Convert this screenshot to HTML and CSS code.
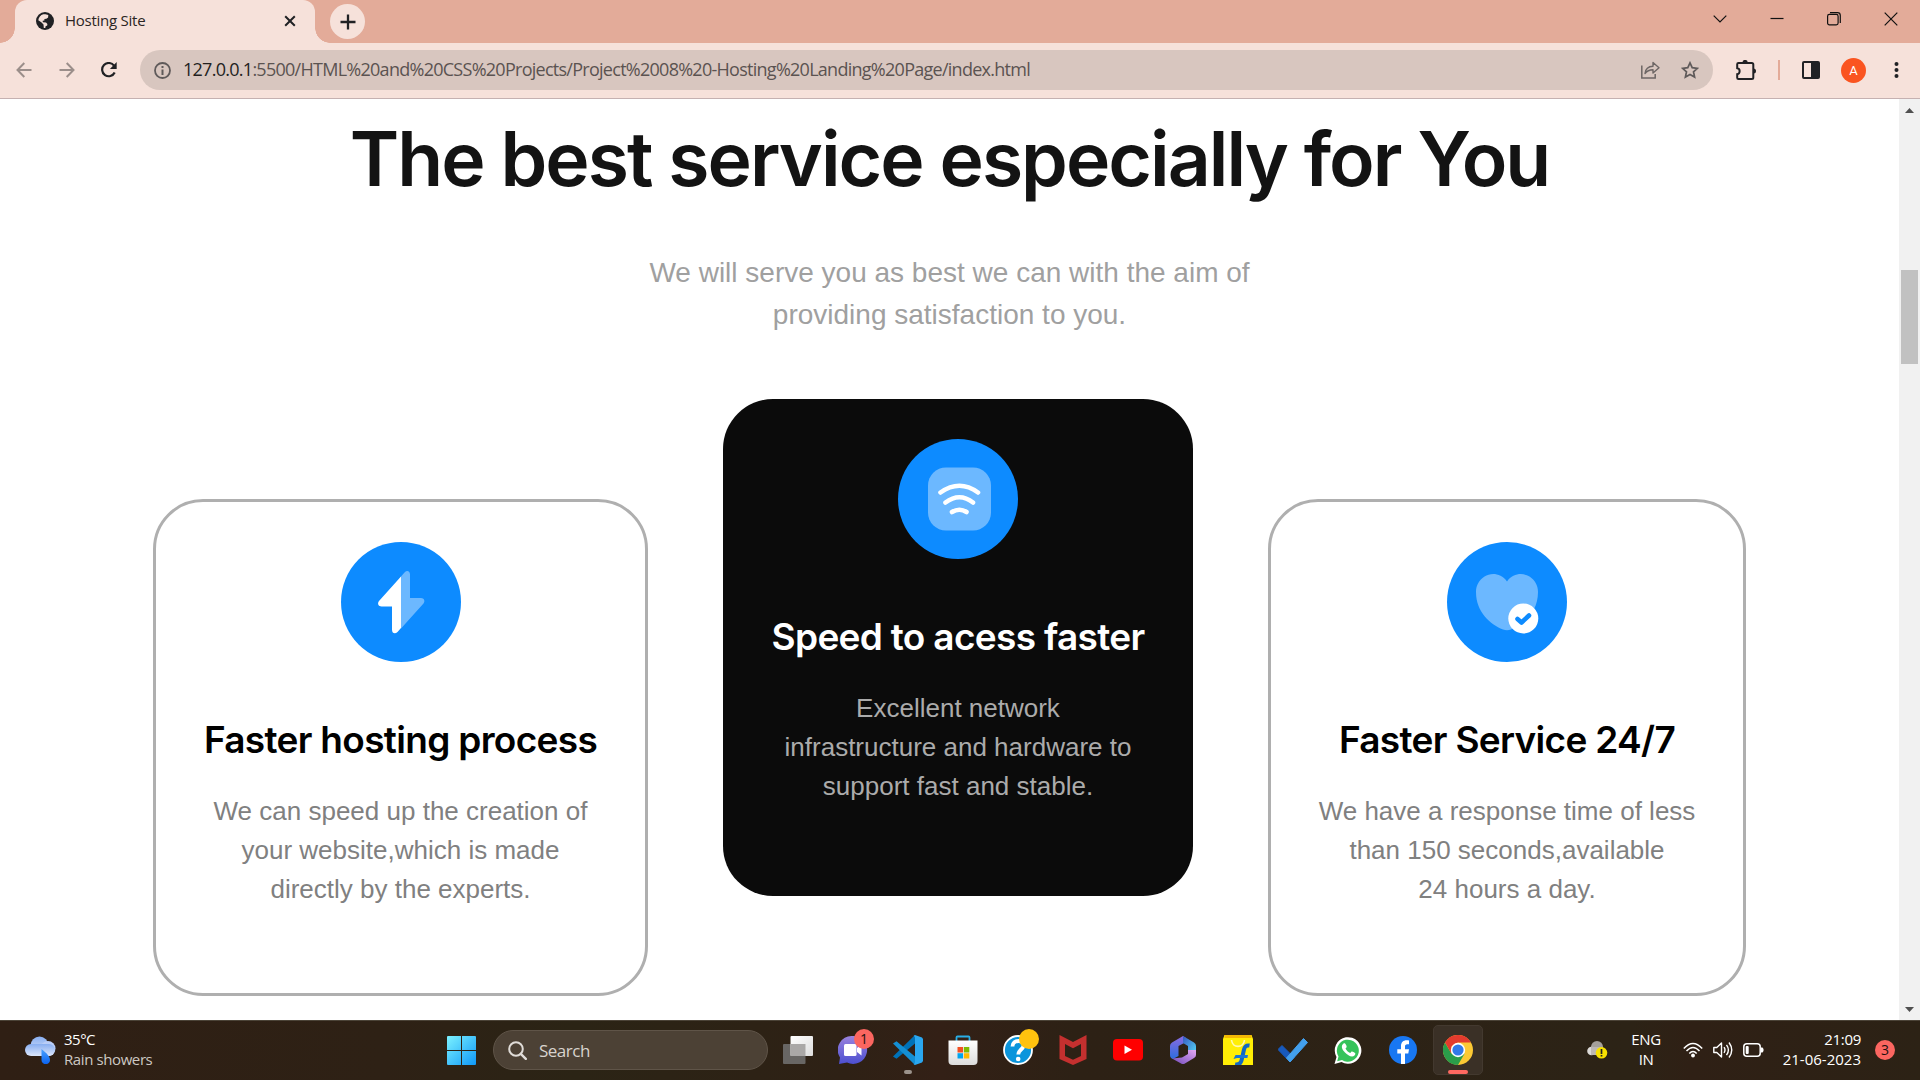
FILE: index.html
```html
<!DOCTYPE html>
<html lang="en">
<head>
<meta charset="utf-8">
<title>Hosting Site</title>
<link rel="stylesheet" href="styles.css">
</head>
<body>
<div class="screen">
  <header class="tabstrip">
    <div class="tab">
      <svg class="favicon" viewBox="0 0 18 18"><circle cx="9" cy="9" r="9" fill="#202124"/><path d="M9.5 2.2l2.8.8-.2 2.4-1.700 1.300-2 .2v1.600l-1.700.3.1 1.400 3.200.2 1.400 1.500-.2 1.700-1.600.6-.3 1.700-1.500.2-.3-3.600-2.200-2.200-3-2c.3-3 2.300-5.400 5-6.100z" fill="#f6e1da"/></svg>
      <span class="tab-title">Hosting Site</span>
      <svg class="tab-close" viewBox="0 0 12 12"><path d="M1.200 1.200l9.600 9.600M10.800 1.200l-9.600 9.600" stroke="#202124" stroke-width="2"/></svg>
    </div>
    <button class="newtab"><svg width="16" height="16" viewBox="0 0 16 16"><path d="M8 .5v15M.5 8h15" stroke="#202124" stroke-width="2.300"/></svg></button>
    <div class="winctl">
      <svg viewBox="0 0 14 14"><path d="M.7 3.700L7 10l6.300-6.300" fill="none" stroke="#111" stroke-width="1.200"/></svg>
      <svg viewBox="0 0 14 14"><path d="M.5 6.500h13" stroke="#111" stroke-width="1.200"/></svg>
      <svg viewBox="0 0 14 14"><rect x=".6" y="2.400" width="10.500" height="10.500" rx="1.800" fill="none" stroke="#111" stroke-width="1.200"/><path d="M3 .7h7.500a2.800 2.800 0 0 1 2.800 2.800V11" fill="none" stroke="#111" stroke-width="1.200"/></svg>
      <svg viewBox="0 0 14 14"><path d="M.7.7l12.600 12.600M13.300.7L.7 13.300" stroke="#111" stroke-width="1.200"/></svg>
    </div>
  </header>

  <nav class="toolbar">
    <div class="nav-buttons">
      <svg width="16" height="16" viewBox="0 0 16 16"><path d="M15.500 8H2M8.300 1L1.500 8l6.800 7" fill="none" stroke="#9b8e8a" stroke-width="2"/></svg>
      <svg width="16" height="16" viewBox="0 0 16 16"><path d="M.5 8H14M7.700 1l6.800 7-6.800 7" fill="none" stroke="#9b8e8a" stroke-width="2"/></svg>
      <svg width="16" height="16" viewBox="0 0 16 16"><path d="M13.700 10.500A6.600 6.600 0 1 1 13 3.600" fill="none" stroke="#202124" stroke-width="2.200"/><path d="M15.700 0v7H8.900z" fill="#202124"/></svg>
    </div>
    <div class="omnibox">
      <svg width="17" height="17" viewBox="0 0 17 17"><circle cx="8.500" cy="8.500" r="7.500" fill="none" stroke="#5f5a5a" stroke-width="1.800"/><path d="M8.500 7.500V13M8.500 4v2" stroke="#5f5a5a" stroke-width="2"/></svg>
      <span class="url"><b>127.0.0.1</b>:5500/HTML%20and%20CSS%20Projects/Project%2008%20-Hosting%20Landing%20Page/index.html</span>
      <svg class="share" width="19" height="18" viewBox="0 0 19 18"><path d="M.8 4.500v12.600h13.400V13" fill="none" stroke="#6d6665" stroke-width="1.500"/><path d="M4 12.500c.5-4.700 3.500-7 8-7.200V1.500l6 5.300-6 5.200V8.700c-3.600 0-6 1-8 3.800z" fill="none" stroke="#6d6665" stroke-width="1.400" stroke-linejoin="round"/></svg>
      <svg width="18" height="18" viewBox="0 0 18 18"><path d="M9 1.900l2.200 4.800 5.200.6-3.900 3.500 1.100 5.200L9 13.400 4.400 16l1.100-5.200L1.600 7.300l5.200-.6z" fill="none" stroke="#5f5a5a" stroke-width="1.700"/></svg>
    </div>
    <svg class="puzzle" width="21" height="21" viewBox="0 0 21 21"><path d="M2.500 3h13.300a1.500 1.500 0 0 1 1.500 1.500v13a1.500 1.500 0 0 1-1.500 1.500H2.500a1.300 1.300 0 0 1-1.300-1.300v-3.500c3-.4 3.500-5.500 0-6V4.300A1.300 1.300 0 0 1 2.500 3z" fill="none" stroke="#202124" stroke-width="2"/><path d="M6.500 2.500a2.600 2.600 0 0 1 5.200 0zM17.500 8.500a2.500 2.500 0 0 1 0 5z" fill="#202124"/></svg>
    <i class="divider"></i>
    <svg class="panel" width="18" height="18" viewBox="0 0 18 18"><rect x="1" y="1" width="16" height="16" rx="1" fill="none" stroke="#202124" stroke-width="2"/><path d="M9 1h8v16H9z" fill="#202124"/></svg>
    <span class="avatar">A</span>
    <svg class="kebab" width="5" height="18" viewBox="0 0 5 18"><circle cx="2.500" cy="3" r="2"/><circle cx="2.500" cy="9" r="2"/><circle cx="2.500" cy="15" r="2"/></svg>
  </nav>

  <div class="viewport">
    <main class="page">
      <h1>The best service especially for You</h1>
      <p class="lead">We will serve you as best we can with the aim of<br>providing satisfaction to you.</p>
      <section class="cards">
        <article class="card process">
          <svg class="icon" viewBox="0 0 120 120"><circle cx="60" cy="60" r="60" fill="#0d8bff"/><path d="M60 34.500L38 59c-2 2.500-.5 5.500 2.500 5.500H51v23c0 4 3 5 5.500 2.500L60 86z" fill="#fff"/><path d="M60 34.500l3.500-4c2.500-2.500 5.500-1.500 5.500 2V56h11c3 0 4.500 3 2.500 5.500L60 86.500z" fill="#6cb8ff"/></svg>
          <h2>Faster hosting process</h2>
          <p>We can speed up the creation of<br>your website,which is made<br>directly by the experts.</p>
        </article>
        <article class="card speed">
          <svg class="icon" viewBox="0 0 120 120"><circle cx="60" cy="60" r="60" fill="#0d8bff"/><rect x="30" y="28.500" width="63" height="63" rx="18" fill="#6cb8ff"/><path d="M42.500 53.500q19-13.500 37.500 0M47.500 63.500q14-10.500 27.500 0M54 73q7.500-4.500 14.500 0" fill="none" stroke="#fff" stroke-width="4.600" stroke-linecap="round"/></svg>
          <h2>Speed to acess faster</h2>
          <p>Excellent network<br>infrastructure and hardware to<br>support fast and stable.</p>
        </article>
        <article class="card service">
          <svg class="icon" viewBox="0 0 120 120"><circle cx="60" cy="60" r="60" fill="#0d8bff"/><path d="M60 39.500C54 31 44 30.500 37.500 34.500 32 38 29 43.500 29 50c0 20 14 32 27 37.500q4 1.500 8 0C77 82 91 70 91 50c0-6.500-3-12-8.500-15.500C76 30.500 66 31 60 39.500z" fill="#6cb8ff"/><circle cx="76.300" cy="76.500" r="15" fill="#fff"/><path d="M70.500 77l4 3.500 7.500-7" fill="none" stroke="#0d8bff" stroke-width="4.600" stroke-linecap="round" stroke-linejoin="round"/></svg>
          <h2>Faster Service 24/7</h2>
          <p>We have a response time of less<br>than 150 seconds,available<br>24 hours a day.</p>
        </article>
      </section>
    </main>
    <div class="scrollbar">
      <svg width="9" height="5" viewBox="0 0 9 5"><path d="M0 5L4.500 0 9 5z" fill="#505050"/></svg>
      <div class="track"><div class="thumb"></div></div>
      <svg width="9" height="5" viewBox="0 0 9 5"><path d="M0 0l4.500 5L9 0z" fill="#505050"/></svg>
    </div>
  </div>

  <footer class="taskbar">
    <div class="weather">
      <svg width="31" height="28" viewBox="0 0 31 28"><defs><linearGradient id="cl" x1="0" y1="0" x2="0" y2="1"><stop offset="0" stop-color="#88aef0"/><stop offset="1" stop-color="#dce6fb"/></linearGradient><linearGradient id="dr" x1="0" y1="0" x2="0" y2="1"><stop offset="0" stop-color="#4aa2ff"/><stop offset="1" stop-color="#0a62f0"/></linearGradient></defs><circle cx="14.500" cy="9.500" r="9" fill="url(#cl)"/><circle cx="23" cy="12.500" r="7.500" fill="#b9cdf7"/><rect x="0" y="8" width="30" height="12" rx="6" fill="url(#cl)"/><path d="M16.500 13c5 4 8.500 7.500 8.500 11a4.200 4.200 0 0 1-8.500 0z" fill="url(#dr)"/></svg>
      <div class="two-line"><span class="temp">35°C</span><span class="dim">Rain showers</span></div>
    </div>

    <div class="apps">
      <svg class="start" width="29" height="29" viewBox="0 0 29 29"><defs><linearGradient id="wn" x1="0" y1="0" x2="1" y2="1"><stop offset="0" stop-color="#7cf2ff"/><stop offset="1" stop-color="#0f98f8"/></linearGradient></defs><path d="M1 0h13v14H0V1a1 1 0 0 1 1-1zM15 0h13a1 1 0 0 1 1 1v13H15zM0 15h14v14H1a1 1 0 0 1-1-1zM15 15h14v13a1 1 0 0 1-1 1H15z" fill="url(#wn)"/></svg>
      <div class="search">
        <svg width="19" height="19" viewBox="0 0 19 19"><circle cx="8" cy="8" r="6.800" fill="none" stroke="#e0dcd8" stroke-width="2"/><path d="M12.800 12.800l5 5" stroke="#e0dcd8" stroke-width="2.400" stroke-linecap="round"/></svg>
        <span>Search</span>
      </div>

      <div class="app"><svg viewBox="0 0 30 30"><defs><linearGradient id="tv" x1="0" y1="0" x2="1" y2="1"><stop offset="0" stop-color="#fff"/><stop offset="1" stop-color="#ddd"/></linearGradient></defs><rect x="0" y="9" width="22.500" height="20" rx="1" fill="#686664"/><rect x="7.500" y="1" width="22.500" height="20" rx="1" fill="url(#tv)"/><path d="M7.500 9h15v12h-15z" fill="#aaa8a7"/></svg></div>
      <div class="app"><svg viewBox="0 0 30 30"><defs><linearGradient id="ct" x1="0" y1="0" x2="0" y2="1"><stop offset="0" stop-color="#9a83dd"/><stop offset="1" stop-color="#4c4fd0"/></linearGradient></defs><path d="M15 1a14 14 0 1 1-6 26.600L1 29l1-6.500A14 14 0 0 1 15 1z" fill="url(#ct)"/><rect x="6" y="9" width="12.500" height="12" rx="1.500" fill="#fff"/><path d="M19 13l4.500-3.500v11L19 17z" fill="#fff"/></svg><span class="badge chat">1</span></div>
      <div class="app"><svg viewBox="0 0 30 30"><path d="M0 21.500L22 0v8.500L3.500 23.700z" fill="#0072b8"/><path d="M0 8.500l3.500-2.300L22 21.500V30z" fill="#148fd4"/><path d="M22 0l7 2.500 1 1.500v22l-1 1.500-7 2.500-1.500-1c1 0 1.500-1 1.500-2V3c0-1-.5-2-1.500-2z" fill="#2aa7f0"/></svg><i class="running"></i></div>
      <div class="app"><svg viewBox="0 0 30 30"><defs><linearGradient id="st" x1="0" y1="0" x2="0" y2="1"><stop offset="0" stop-color="#fff"/><stop offset="1" stop-color="#dcdcdc"/></linearGradient></defs><path d="M8.500 6V2.500a1 1 0 0 1 1-1h11a1 1 0 0 1 1 1V6" fill="none" stroke="#29aee6" stroke-width="1.800"/><path d="M.5 5.500h29V26a4 4 0 0 1-4 4h-21a4 4 0 0 1-4-4z" fill="url(#st)"/><path d="M9.500 12H15v5.500H9.500z" fill="#f25022"/><path d="M15.800 12h5.500v5.500h-5.500z" fill="#7fba00"/><path d="M9.500 18.200H15v5.300H9.500z" fill="#00a4ef"/><path d="M15.800 18.200h5.500v5.300h-5.500z" fill="#ffb900"/></svg></div>
      <div class="app"><svg viewBox="0 0 30 30"><circle cx="15" cy="15" r="14" fill="#0b95dc" stroke="#fff" stroke-width="1.800"/><path d="M9.500 11.500c0-7.500 12-7 11-.5-.6 3.500-5.200 4-5.200 8.500" fill="none" stroke="#fff" stroke-width="3.800"/><circle cx="15.200" cy="24" r="2.300" fill="#fff"/></svg><i class="dot"></i></div>
      <div class="app"><svg viewBox="0 0 30 30"><path d="M1.500 0L15 7 28.500 0v24L15 30 1.500 24zM7 9v12l8 3.700L23 21V9l-8 4.300z" fill="#c4302f" fill-rule="evenodd"/></svg></div>
      <div class="app"><svg viewBox="0 0 30 30"><rect x="0" y="4" width="30" height="21.500" rx="4" fill="#f00"/><path d="M11.500 10.500l7.500 4.300-7.500 4.300z" fill="#fff"/></svg></div>
      <div class="app"><svg viewBox="0 0 30 30"><defs><linearGradient id="m1" x1="0" y1="0" x2="0" y2="1"><stop offset="0" stop-color="#8b6be0"/><stop offset="1" stop-color="#2c6de0"/></linearGradient><linearGradient id="m2" x1="0" y1="0" x2="1" y2="1"><stop offset="0" stop-color="#3556c0"/><stop offset="1" stop-color="#56d8f8"/></linearGradient><linearGradient id="m3" x1="0" y1="1" x2="1" y2="0"><stop offset="0" stop-color="#7048b8"/><stop offset="1" stop-color="#e3a8f5"/></linearGradient></defs><path d="M15 1L4 7.500Q2 8.500 2 11v9q0 3 3 4l5.500-3V11L18 7V3z" fill="url(#m1)"/><path d="M15 1l11 6.500Q28 8.500 28 11v8l-8-3v-5l-5-3z" fill="url(#m2)"/><path d="M28 15v5q0 2-2 3l-9.500 5.700q-1.500.8-3 0L4 23.500l10-1 6-3.500v-4z" fill="url(#m3)"/></svg></div>
      <div class="app"><svg viewBox="0 0 30 30"><path d="M1.500 0h27L30 4v26H0V4z" fill="#ffee05"/><path d="M1.500 0h27v3h-27z" fill="#f2b705"/><path d="M8.500 5c1 8.500 12 8.500 13 0" fill="none" stroke="#fff7b0" stroke-width="1.600"/><path d="M12 29.500c3 .5 5.500-.5 6.500-4L21 14.500c.8-3.500 2.300-4.500 5.500-4" fill="none" stroke="#1168c5" stroke-width="4"/><path d="M10.500 24l2-4h12.500l-.6 3H14z" fill="#1a77d4"/></svg></div>
      <div class="app"><svg viewBox="0 0 30 30"><path d="M0 14.500L4 10.500l12 12-4 4.500z" fill="#185abd" stroke="#185abd" stroke-linejoin="round"/><path d="M12 27L8.500 23 25.500 3.500 29.500 7.500z" fill="#43a0ed" stroke="#43a0ed" stroke-linejoin="round"/></svg></div>
      <div class="app"><svg viewBox="0 0 30 30"><path d="M1.500 29l2-7A13.300 13.300 0 1 1 8.500 27z" fill="#fff"/><path d="M4.200 26.300l1.300-4.800A11 11 0 1 1 9 25z" fill="#35c35a"/><path d="M10.500 8.500c-3 2.500-1.500 6 1.500 9s7 5.500 9.500 3c1.500-1.700 1-2.300-.5-3.200-2.500-1.600-2.500-.8-3.800.6-1.700-.5-4-2.700-4.700-4.400 1.300-1.300 1.500-1.700.6-3.500-.8-1.600-1.300-2-2.600-1.500z" fill="#fff"/></svg></div>
      <div class="app"><svg viewBox="0 0 30 30"><circle cx="15" cy="15" r="14" fill="#1877f2"/><path d="M13 29V18.500H9.300v-4.200H13v-3c0-4 2.300-6 5.600-6 1.200 0 2.400.2 2.400.2v3.700h-1.700c-1.700 0-2.300 1-2.300 2.200v2.900h4l-.7 4.200H17V29z" fill="#fff"/></svg></div>
      <div class="app active"><svg viewBox="0 0 30 30"><circle cx="15" cy="15" r="15" fill="#fcc934"/><path d="M2 7.500A15 15 0 0 0 15 30l6.500-11.200L15 15l-6.500 3.700z" fill="#2a9d4a"/><path d="M2 7.500A15 15 0 0 1 28 7.500H15L8.500 11.200v7.500z" fill="#e33b2e"/><circle cx="15" cy="15" r="7.200" fill="#fff"/><circle cx="15" cy="15" r="5.600" fill="#3279e8"/></svg><i class="running focused"></i></div>
    </div>

    <div class="tray">
      <svg class="cloud" width="21" height="18" viewBox="0 0 21 18"><circle cx="10" cy="6" r="6" fill="#a5a09b"/><circle cx="4.500" cy="10" r="4.300" fill="#dcdad7"/><path d="M4 6h12v8H4z" fill="#bcb8b4"/><circle cx="14.500" cy="11.800" r="5.800" fill="#f7e000"/><path d="M14.500 8v5M14.500 14v1.600" stroke="#222" stroke-width="1.700"/></svg>
      <div class="two-line lang"><span>ENG</span><span>IN</span></div>
      <svg class="wifi" width="20" height="16" viewBox="0 0 20 16"><path d="M.8 6.500Q10-3.500 19.200 6.500M3.500 9Q10 1.800 16.500 9M6.300 11.600Q10 7.500 13.700 11.600" fill="none" stroke="#fff" stroke-width="1.500"/><circle cx="10" cy="13.500" r="1.900" fill="#fff"/></svg>
      <svg width="20" height="18" viewBox="0 0 20 18"><path d="M.8 6.500h3L8.500 2v14l-4.700-4.500h-3z" fill="none" stroke="#fff" stroke-width="1.400" stroke-linejoin="round"/><path d="M11 6.200q2 2.800 0 5.600M13.500 3.800q3.800 5.200 0 10.400M16 1.500q5.500 7.500 0 15" fill="none" stroke="#fff" stroke-width="1.400"/></svg>
      <svg width="21" height="14" viewBox="0 0 21 14"><rect x=".8" y=".8" width="16.400" height="12.400" rx="3" fill="none" stroke="#fff" stroke-width="1.500"/><rect x="2.700" y="3" width="3" height="8" rx="1" fill="#fff"/><path d="M18 4.500h1.500L20.500 6v2l-1 1.500H18z" fill="#fff"/></svg>
      <div class="two-line clock"><span class="time">21:09</span><span class="date">21-06-2023</span></div>
      <span class="badge notif">3</span>
    </div>
  </footer>
</div>
</body>
</html>
```
FILE: styles.css
```css
* { box-sizing: border-box; }
body { margin: 0; font-family: "Open Sans", "Noto Sans", sans-serif; }
svg { display: block; flex: none; }
.screen { width: 1920px; height: 1080px; display: flex; flex-direction: column; overflow: hidden; background: #fff; }

/* tab strip */
.tabstrip { height: 43px; flex: none; background: #e3ab99; display: flex; padding-left: 15px; }
.tab { position: relative; width: 300px; height: 43px; background: #f6e1da; border-radius: 12px 12px 0 0; display: flex; align-items: center; padding: 0 19px 1px 21px; }
.tab::before, .tab::after { content: ""; position: absolute; bottom: 0; width: 15px; height: 15px; }
.tab::before { left: -15px; background: radial-gradient(circle at 0 0, transparent 14.5px, #f6e1da 15px); }
.tab::after { right: -15px; background: radial-gradient(circle at 100% 0, transparent 14.5px, #f6e1da 15px); }
.favicon { width: 18px; height: 18px; }
.tab-title { margin-left: 11px; padding-bottom: 2px; font-size: 15px; letter-spacing: -0.25px; color: #2b2523; white-space: nowrap; }
.tab-close { width: 12px; height: 12px; margin-left: auto; }
.newtab { width: 35px; height: 35px; margin: 4px 0 0 15px; border: 0; padding: 0; border-radius: 50%; background: #f6e1da; display: grid; place-items: center; }
.winctl { margin-left: auto; display: flex; gap: 43px; padding: 12px 22px 0 0; }
.winctl svg { width: 14px; height: 14px; }

/* toolbar */
.toolbar { height: 56px; flex: none; background: #f6e1da; border-bottom: 1px solid #c5b1b1; display: flex; align-items: center; padding: 0 21px 1px 16px; }
.nav-buttons { display: flex; gap: 26.5px; width: 124px; }
.omnibox { width: 1573px; height: 40px; border-radius: 20px; background: #d8c6bf; display: flex; align-items: center; padding: 0 14px 0 14px; }
.url { margin-left: 12px; padding-bottom: 2px; font-size: 18px; letter-spacing: -0.73px; color: #5b5351; white-space: nowrap; }
.url b { font-weight: 400; color: #231f1e; }
.share { margin: 0 21px 0 auto; }
.puzzle { margin-left: 23px; }
.divider { width: 2px; height: 20px; background: #e3ab99; margin-left: 21px; }
.panel { margin-left: 22px; }
.avatar { width: 25px; height: 25px; margin-left: 21px; border-radius: 50%; background: #fa5420; color: #fff; font: 13px/25px Roboto, sans-serif; text-align: center; }
.kebab { margin-left: auto; fill: #202124; }

/* page */
.viewport { flex: 1; display: flex; min-height: 0; }
.page { width: 1899px; background: #fff; text-align: center; overflow: hidden; }
.page h1 { margin: 15px 0 0; font: 620 75px/90px Inter, sans-serif; letter-spacing: -1.98px; color: #131313; white-space: nowrap; }
.lead { margin: 48px 0 0; font: 28px/42px "Liberation Sans", Arial, sans-serif; color: #a0a0a0; }
.cards { display: flex; align-items: flex-start; margin: 63px 0 0 153px; }
.card { height: 497px; border-radius: 50px; border: 3px solid #afafaf; padding-top: 40px; }
.process { width: 495px; margin-top: 100px; }
.speed { width: 470px; margin-left: 75px; border: 0; background: #0b0b0b; }
.service { width: 478px; margin: 100px 0 0 75px; }
.icon { width: 120px; height: 120px; margin: 0 auto; }
.card h2 { margin: 55px 0 0; font: 620 37px/45px Inter, sans-serif; letter-spacing: -0.68px; color: #000; white-space: nowrap; }
.card p { margin: 30px 0 0; font: 26px/39px "Liberation Sans", Arial, sans-serif; color: #808080; white-space: nowrap; }
.card.speed h2 { color: #fff; }
.card.speed p { color: #ababab; }

.scrollbar { width: 21px; background: #f1f1f1; display: flex; flex-direction: column; align-items: center; padding: 9px 0 8px; }
.track { flex: 1; width: 17px; padding-top: 157px; }
.thumb { height: 94px; background: #c1c1c1; }

/* taskbar */
.taskbar { height: 60px; flex: none; display: flex; align-items: center; color: #fff; font-size: 15px; box-shadow: inset 0 1px #4b4337; background: linear-gradient(90deg, #2f1f14 0, #2e2115 20%, #2b2415 30%, #2e2115 44%, #332016 49%, #2d2115 56%, #2c2316 85%, #2f2015 88%, #2c2215 100%); }
.two-line { display: flex; flex-direction: column; line-height: 20px; padding-bottom: 3px; white-space: nowrap; }
.weather { width: 433px; display: flex; align-items: center; padding-left: 25px; gap: 8px; }
.temp { letter-spacing: -0.5px; }
.dim { color: #cdc8c3; letter-spacing: -0.4px; }
.apps { display: flex; align-items: center; padding-left: 14px; }
.search { width: 275px; height: 40px; margin: 0 2px 0 17px; border-radius: 20px; background: #4c4135; border: 1px solid #5f5448; display: flex; align-items: center; gap: 12px; padding-left: 14px; color: #d8d3ce; font-size: 17px; letter-spacing: -0.5px; }
.app { position: relative; width: 55px; height: 50px; display: grid; place-items: center; }
.app > svg { width: 30px; height: 30px; }
.active::before { content: ""; position: absolute; inset: 0 2px 0 3px; border-radius: 5px; background: #3a3026; border: 1px solid #43392f; }
.active > svg { position: relative; }
.running { position: absolute; bottom: 1px; left: 24px; width: 8px; height: 4px; border-radius: 2px; background: #9b928b; }
.focused { left: 18px; width: 20px; background: #ff6961; }
.badge { width: 20px; height: 20px; border-radius: 50%; background: #fb6660; color: #1b1110; font-size: 14px; line-height: 20px; text-align: center; }
.chat { position: absolute; top: 4px; right: 6px; }
.dot { position: absolute; top: 4px; right: 6px; width: 20px; height: 20px; border-radius: 50%; background: #ffc20e; }
.tray { flex: 1; display: flex; align-items: center; gap: 10px; padding-right: 25px; }
.cloud { margin-left: 102px; }
.lang { align-items: center; width: 34px; margin: 0 10px 0 11px; letter-spacing: -0.4px; }
.clock { align-items: flex-end; margin-left: auto; }
.time { letter-spacing: -0.3px; }
.date { letter-spacing: 0; }
.notif { margin-left: 4px; }
```
